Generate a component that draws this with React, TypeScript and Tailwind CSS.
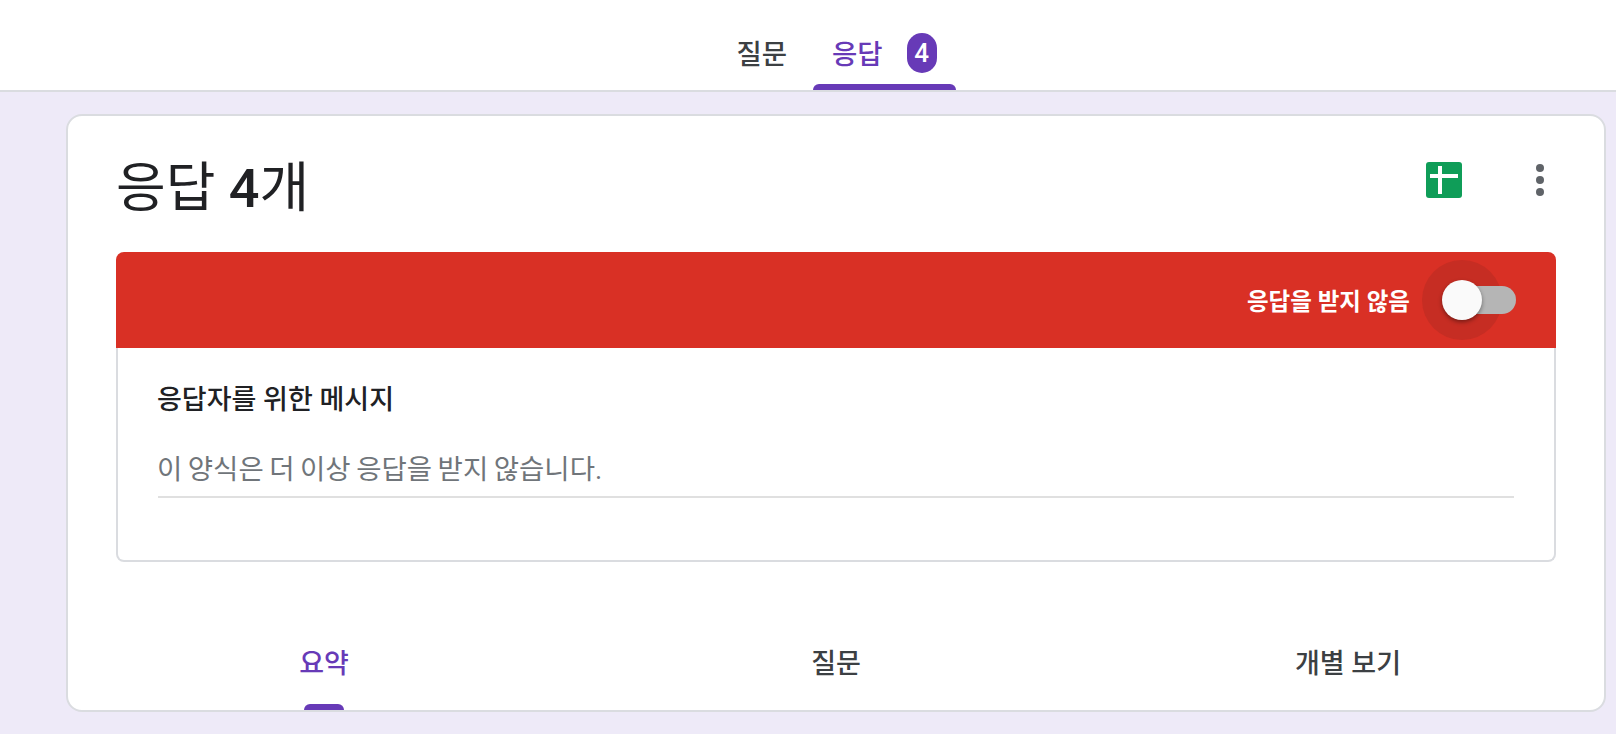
const font = "font-['Roboto','Noto_Sans_CJK_KR',sans-serif]";

function SheetsIcon() {
  return (
    <svg width="36" height="36" viewBox="0 0 36 36" className="block">
      <rect width="36" height="36" rx="3" fill="#0f9d58" />
      <rect x="4" y="12" width="28" height="4" fill="#fff" />
      <rect x="12" y="4" width="4" height="28" fill="#fff" />
    </svg>
  );
}

function MoreDots() {
  return (
    <div className="flex flex-col gap-1">
      <span className="w-2 h-2 rounded-full bg-[#5f6368]" />
      <span className="w-2 h-2 rounded-full bg-[#5f6368]" />
      <span className="w-2 h-2 rounded-full bg-[#5f6368]" />
    </div>
  );
}

function Toggle() {
  return (
    <div className="relative w-[74px] h-[28px] ml-[32px] mr-[40px]">
      <div className="absolute left-[-20px] top-[-26px] w-[80px] h-[80px] rounded-full bg-[#c62d23]" />
      <div className="absolute right-0 top-0 w-[60px] h-[28px] rounded-full bg-[#b5b5b5]" />
      <div className="absolute left-0 top-[-6px] w-[40px] h-[40px] rounded-full bg-[#fafafa] shadow-[0_2px_4px_rgba(0,0,0,0.4)]" />
    </div>
  );
}

export default function App() {
  const subTabs = ['요약', '질문', '개별 보기'];

  return (
    <div className={`${font} w-[1616px] h-[734px] overflow-hidden bg-[#eeeaf8] antialiased`}>
      <header className="h-[92px] bg-white border-b-2 border-[#dadce0] flex justify-center pl-[48px]">
        <div className="flex items-start">
          <div className="h-[90px] px-[28px] flex items-center pt-[19px] text-[27.5px] font-medium text-[#3c4043]">
            질문
          </div>
          <div className="relative h-[90px] ml-[-2px] px-[19px] flex items-center gap-[24px] pt-[16px] text-[27.5px] font-medium text-[#673ab7]">
            <span className="mt-[3px]">응답</span>
            <span className="w-[30px] h-[40px] rounded-[15px] bg-[#673ab7] text-white text-[26px] flex items-center justify-center">
              4
            </span>
            <div className="absolute left-0 right-0 bottom-0 h-[6px] rounded-t-[6px] bg-[#673ab7]" />
          </div>
        </div>
      </header>

      <main className="ml-[66px] mr-[10px] mt-[22px] h-[598px] bg-white border-2 border-[#dadce0] rounded-[16px] overflow-hidden relative">
        <div className="px-[48px]">
          <div className="h-[136px] flex items-start justify-between">
            <h1 className="mt-[38px] text-[54px] leading-[70px] font-normal text-[#202124]">
              응답 <span className="font-medium">4</span>개
            </h1>
            <div className="flex items-start mt-[46px]">
              <SheetsIcon />
              <div className="ml-[74px] mr-[12px] mt-[2px]">
                <MoreDots />
              </div>
            </div>
          </div>

          <div className="h-[96px] bg-[#d93025] rounded-t-[8px] flex items-center justify-end">
            <span className="pt-[5px] text-[23.5px] font-bold text-white">응답을 받지 않음</span>
            <Toggle />
          </div>
          <div className="h-[214px] border-2 border-t-0 border-[#dadce0] rounded-b-[8px] px-[40px] pt-[34px]">
            <p className="-ml-px text-[27px] leading-[36px] font-medium text-[#202124]">응답자를 위한 메시지</p>
            <div className="mt-[26px] h-[54px] pt-[4px] border-b-2 border-[#e0e0e0] text-[27.5px] leading-[44px] [word-spacing:-1.3px] text-[#70757a]">
              <span className="-ml-px">이 양식은 더 이상 응답을 받지 않습니다.</span>
            </div>
          </div>
        </div>

        <nav className="grid grid-cols-3 mt-[61px]">
          {subTabs.map((tab, i) => (
            <div
              key={tab}
              className={`relative h-[87px] flex justify-center pt-[21px] text-[27px] leading-[40px] font-medium ${
                i === 0 ? 'text-[#673ab7]' : 'text-[#3c4043]'
              }`}
            >
              {tab}
              {i === 0 && (
                <div className="absolute bottom-[0px] left-1/2 -translate-x-1/2 w-[40px] h-[6px] rounded-t-[6px] bg-[#673ab7]" />
              )}
            </div>
          ))}
        </nav>
      </main>
    </div>
  );
}
